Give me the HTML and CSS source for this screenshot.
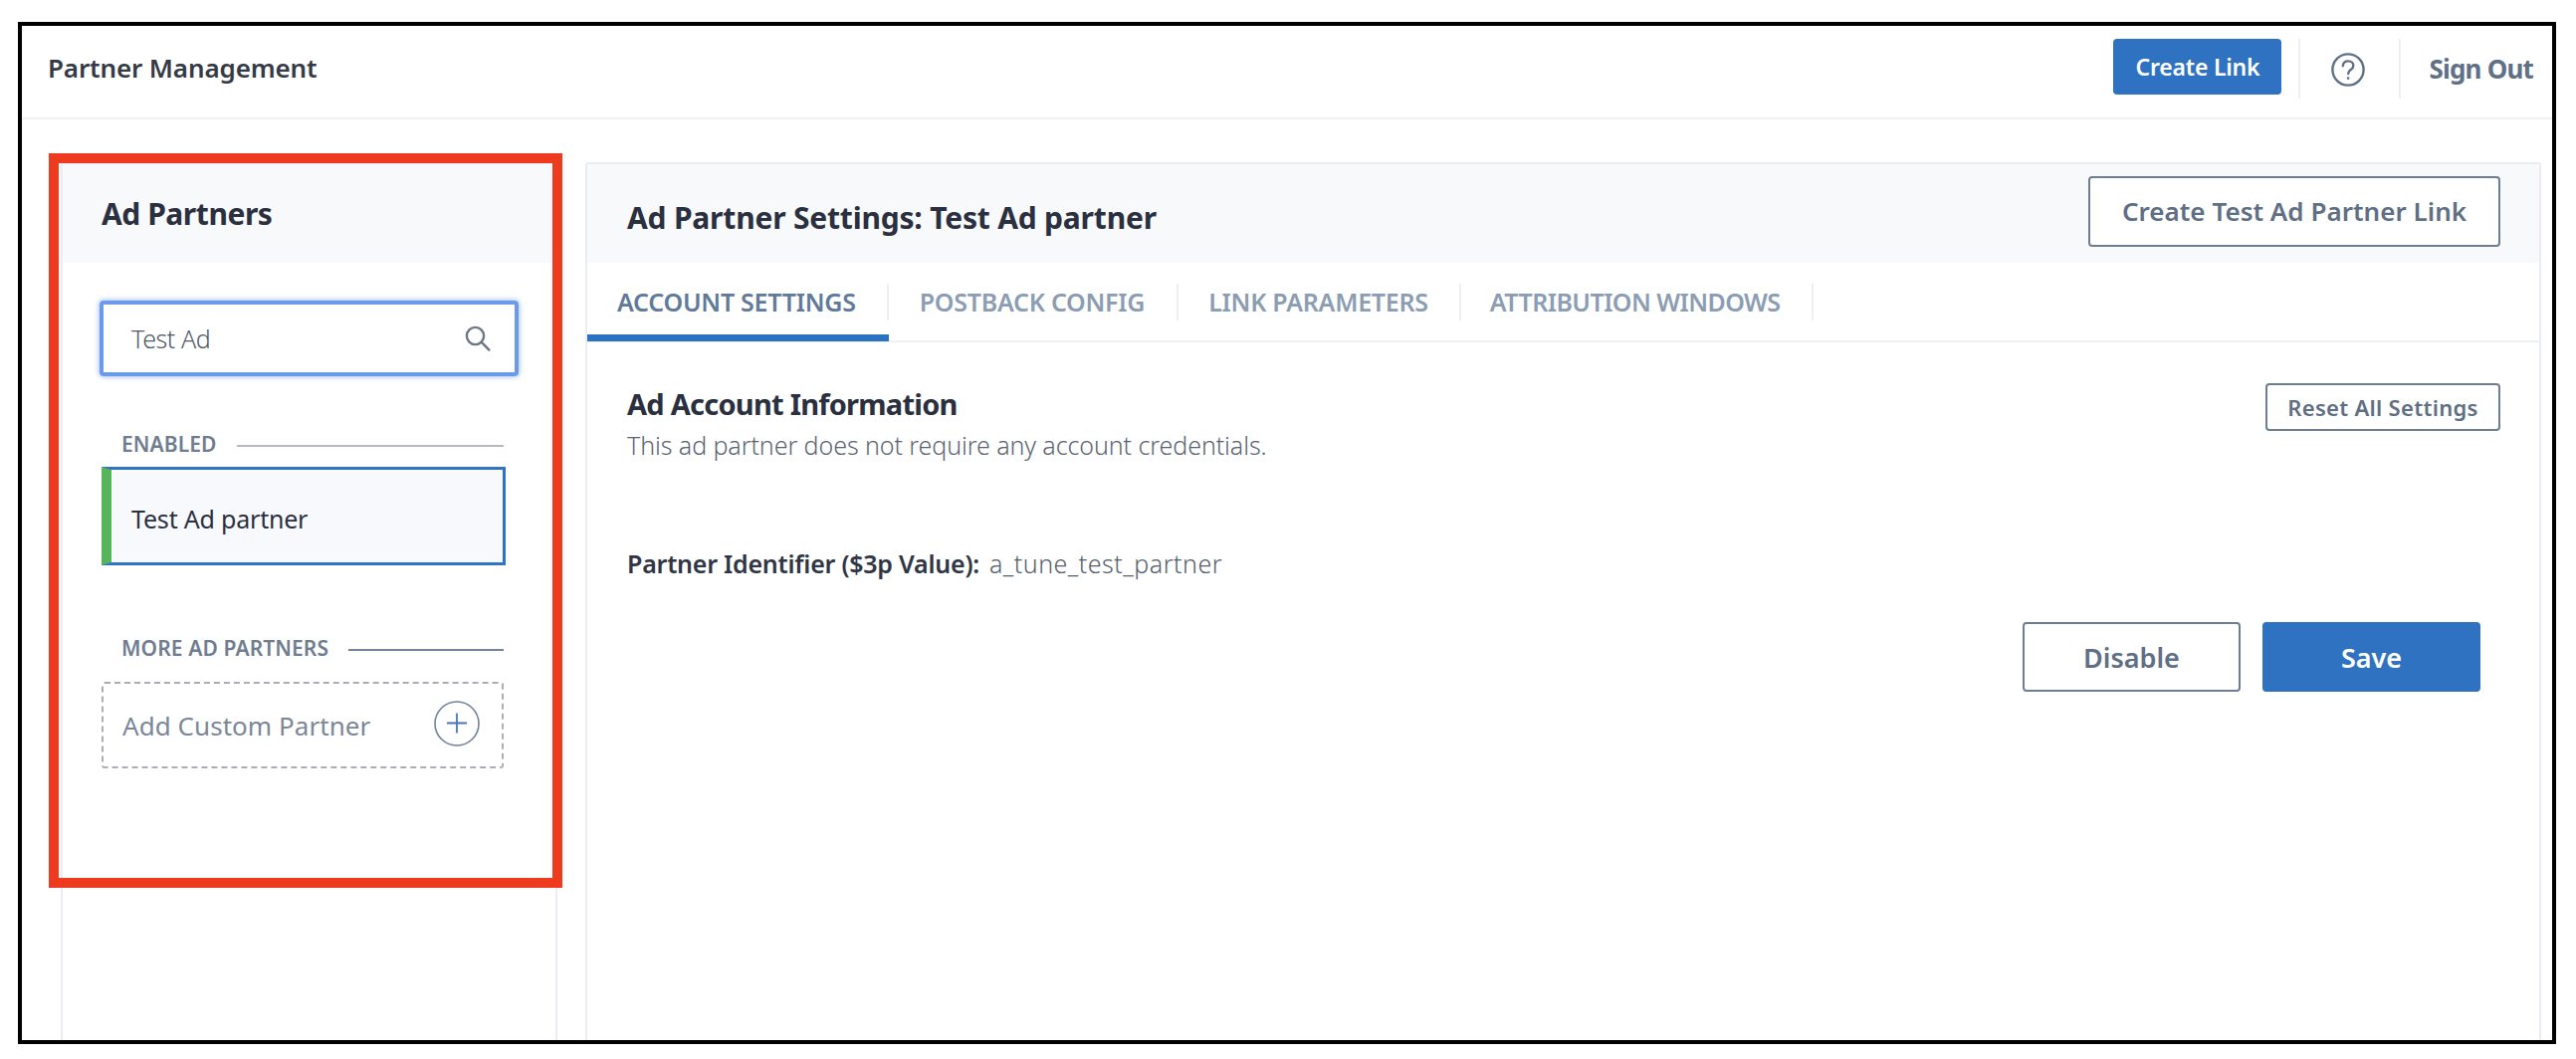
FILE: index.html
```html
<!DOCTYPE html>
<html lang="en">
<head>
<meta charset="utf-8">
<title>Partner Management</title>
<link rel="stylesheet" href="styles.css">
</head>
<body>
<div class="frame">
  <header class="topbar">
    <div class="topbar-title">Partner Management</div>
    <div class="topbar-actions">
      <button class="btn-create">Create Link</button>
      <span class="vsep"></span>
      <svg class="help" viewBox="0 0 34 34" fill="none" stroke="#5f7088" stroke-width="2.4" stroke-linecap="round">
        <circle cx="17" cy="17" r="15.6"/>
        <path d="M11.8 13.2c.3-3 2.5-4.8 5.3-4.8 3 0 5.2 1.9 5.2 4.5 0 2-1 3.1-2.6 4.2-1.6 1.1-2.5 2-2.5 4"/>
        <circle cx="17.1" cy="25.6" r=".7" fill="#5f7088" stroke-width="1.4"/>
      </svg>
      <span class="vsep vsep-second"></span>
      <span class="signout">Sign Out</span>
    </div>
  </header>

  <main class="content">
    <aside class="card partners">
      <div class="card-head partners-head"><h2 class="partners-title">Ad Partners</h2></div>
      <div class="partners-body">
        <div class="search">
          <span class="search-text">Test Ad</span>
          <svg class="search-icon" viewBox="0 0 26 26" fill="none" stroke="#6b7686" stroke-width="2.4" stroke-linecap="round">
            <circle cx="10.5" cy="10.5" r="8.6"/>
            <path d="M16.8 16.8l7.6 7.8"/>
          </svg>
        </div>
        <div class="group-label group-enabled"><span>ENABLED</span><i class="rule rule-light"></i></div>
        <div class="partner-item">Test Ad partner</div>
        <div class="group-label group-more"><span>MORE AD PARTNERS</span><i class="rule"></i></div>
        <div class="add-custom">
          <span>Add Custom Partner</span>
          <svg class="plus" viewBox="0 0 46 46" fill="none">
            <circle cx="23" cy="23" r="22" stroke="#71829c" stroke-width="1.6"/>
            <path d="M23 12.5v20M13 22.5h20" stroke="#4a76b5" stroke-width="1.8"/>
          </svg>
        </div>
      </div>
    </aside>

    <section class="card settings">
      <div class="card-head settings-head">
        <h1 class="settings-title">Ad Partner Settings: Test Ad partner</h1>
        <button class="btn-outline btn-test-link">Create Test Ad Partner Link</button>
      </div>
      <nav class="tabs">
        <div class="tab tab-active"><span class="tab-label tab-1">ACCOUNT SETTINGS</span></div>
        <div class="tab"><span class="tab-label tab-2">POSTBACK CONFIG</span></div>
        <div class="tab"><span class="tab-label tab-3">LINK PARAMETERS</span></div>
        <div class="tab"><span class="tab-label tab-4">ATTRIBUTION WINDOWS</span></div>
      </nav>
      <div class="settings-body">
        <div class="info-row">
          <div class="info-text">
            <h3 class="info-title">Ad Account Information</h3>
            <p class="info-desc">This ad partner does not require any account credentials.</p>
          </div>
          <button class="btn-outline btn-reset">Reset All Settings</button>
        </div>
        <div class="identifier">
          <strong>Partner Identifier ($3p Value):</strong>
          <span>a_tune_test_partner</span>
        </div>
        <div class="actions">
          <button class="btn-outline btn-action">Disable</button>
          <button class="btn-primary btn-action">Save</button>
        </div>
      </div>
    </section>
  </main>

  <div class="highlight"></div>
</div>
</body>
</html>
```

FILE: styles.css
```css
* { box-sizing: border-box; }
html, body { margin: 0; height: 100%; background: #fff; }
body {
  padding: 22px 20px 15px 18px;
  font-family: "Noto Sans", Lato, sans-serif;
  overflow: hidden;
}
h1, h2, h3, p { margin: 0; }
button { font-family: inherit; cursor: pointer; margin: 0; padding: 0; }

.frame {
  position: relative;
  height: 1027px;
  width: 2550px;
  border: 4px solid #000;
  display: flex;
  flex-direction: column;
  overflow: hidden;
}

.topbar {
  height: 94px;
  flex: none;
  display: flex;
  justify-content: space-between;
  padding: 13px 19px 0 26px;
  border-bottom: 2px solid #eef0f4;
}
.topbar-title {
  font-size: 26px;
  font-weight: 600;
  letter-spacing: -0.13px;
  color: #343b47;
  line-height: 36px;
  margin-top: 11px;
}
.topbar-actions { display: flex; align-items: flex-start; }
.btn-create {
  width: 169px;
  height: 56px;
  background: #2f72c2;
  border: 0;
  border-radius: 4px;
  color: #fff;
  font-size: 23px;
  font-weight: 600;
  letter-spacing: -0.2px;
}
.vsep { width: 2px; height: 60px; background: #edeff3; margin: 0 31px 0 17px; }
.vsep-second { margin: 0 28px 0 34px; }
.help { width: 34px; height: 34px; margin-top: 14px; }
.signout {
  font-size: 26px;
  font-weight: 700;
  letter-spacing: -0.8px;
  color: #5f7088;
  line-height: 36px;
  margin-top: 12px;
}

.content {
  flex: 1;
  min-height: 0;
  display: flex;
  gap: 28px;
  padding: 43px 11px 0 39px;
}
.card {
  border: 2px solid #e9ecf2;
  border-bottom: 0;
  border-radius: 3px 3px 0 0;
  display: flex;
  flex-direction: column;
}
.card-head { height: 99px; flex: none; background: #f8f9fb; }

.partners { width: 499px; flex: none; }
.partners-head { display: flex; align-items: center; padding: 1px 0 0 39px; }
.partners-title { font-size: 30px; font-weight: 700; letter-spacing: -0.45px; color: #2a3040; line-height: 40px; }
.partners-body { padding: 38px 0 0 39px; }

.search {
  width: 421px;
  height: 76px;
  margin-left: -2px;
  border: 4px solid #6c9aea;
  border-radius: 4px;
  box-shadow: 0 0 5px 1px #a9c4f4;
  display: flex;
  align-items: center;
  justify-content: space-between;
  padding: 0 24px 0 28px;
}
.search-text { font-size: 25px; font-weight: 300; letter-spacing: -0.4px; color: #4f5968; }
.search-icon { width: 26px; height: 26px; }

.group-label {
  width: 404px;
  height: 26px;
  display: flex;
  align-items: center;
  gap: 20px;
  padding-left: 20px;
  font-size: 21px;
  font-weight: 600;
  letter-spacing: 0.1px;
  color: #6f7d90;
}
.group-enabled { margin-top: 55px; }
.group-more { margin-top: 70px; }
.rule { flex: 1; height: 2px; background: #74829a; margin-top: 3px; }
.rule-light { background: #b4bac4; }

.partner-item {
  width: 406px;
  height: 99px;
  margin-top: 10px;
  background: #f8f9fd;
  border: 3px solid #2f74c4;
  border-left: 10px solid #56b45a;
  display: flex;
  align-items: center;
  padding: 4px 0 0 20px;
  font-size: 25px;
  letter-spacing: -0.2px;
  color: #2a3040;
}

.add-custom {
  width: 404px;
  height: 87px;
  margin-top: 21px;
  border: 2px dashed #a9adb4;
  border-radius: 3px;
  display: flex;
  align-items: center;
  justify-content: space-between;
  padding: 0 22px 0 19px;
  font-size: 26px;
  letter-spacing: 0.05px;
  color: #7b8799;
}
.plus { width: 46px; height: 46px; margin-top: -3px; }

.settings { width: 1965px; flex: none; }
.settings-head {
  display: flex;
  align-items: center;
  justify-content: space-between;
  padding: 0 39px 5px 40px;
}
.settings-title {
  font-size: 30px;
  font-weight: 700;
  letter-spacing: -0.2px;
  color: #2a3040;
  line-height: 40px;
  margin-top: 13px;
}
.btn-outline {
  background: #fff;
  border: 2px solid #6d7d92;
  border-radius: 4px;
  color: #5f6f85;
  font-weight: 600;
}
.btn-test-link { width: 414px; height: 71px; font-size: 26px; letter-spacing: 0.03px; }
.btn-reset { width: 236px; height: 48px; font-size: 22px; letter-spacing: 0.3px; }

.tabs {
  height: 80px;
  flex: none;
  display: flex;
  border-bottom: 2px solid #eceff4;
}
.tab {
  height: 79px;
  padding-top: 21px;
  border-bottom: 7px solid transparent;
}
.tab-active { border-bottom-color: #2c72c3; }
.tab-label {
  display: block;
  height: 37px;
  line-height: 37px;
  border-right: 2px solid #edeff3;
  font-size: 25px;
  font-weight: 600;
  letter-spacing: -0.25px;
  color: #8b9db3;
}
.tab-active .tab-label { color: #5f7a9a; }
.tab-1 { padding: 0 31px 0 30px; }
.tab-2 { padding: 0 32px 0 31px; }
.tab-3 { padding: 0 31px 0 30px; }
.tab-4 { padding: 0 31px 0 29px; letter-spacing: -0.55px; }

.settings-body { padding: 41px 39px 0 40px; }
.info-row { display: flex; justify-content: space-between; align-items: flex-start; }
.info-title {
  font-size: 29px;
  font-weight: 700;
  letter-spacing: -0.75px;
  color: #2a3040;
  line-height: 40px;
  margin-top: 1px;
}
.info-desc {
  font-size: 25px;
  font-weight: 300;
  letter-spacing: -0.08px;
  color: #5a6473;
  line-height: 36px;
  margin-top: 3px;
}
.identifier {
  display: flex;
  gap: 10px;
  margin-top: 81px;
  line-height: 40px;
  font-size: 25px;
  color: #2f3645;
}
.identifier strong { font-weight: 600; letter-spacing: -0.24px; }
.identifier span { font-weight: 300; letter-spacing: 0.5px; color: #555e6c; }
.actions {
  display: flex;
  justify-content: flex-end;
  gap: 22px;
  padding-right: 20px;
  margin-top: 39px;
}
.btn-action { width: 219px; height: 70px; font-size: 27px; }
.btn-primary {
  background: #2f72c2;
  border: 0;
  border-radius: 4px;
  color: #fff;
  font-weight: 600;
}

.highlight {
  position: absolute;
  left: 27px;
  top: 128px;
  width: 516px;
  height: 738px;
  border: 10px solid #ee3a1e;
  pointer-events: none;
}
```
